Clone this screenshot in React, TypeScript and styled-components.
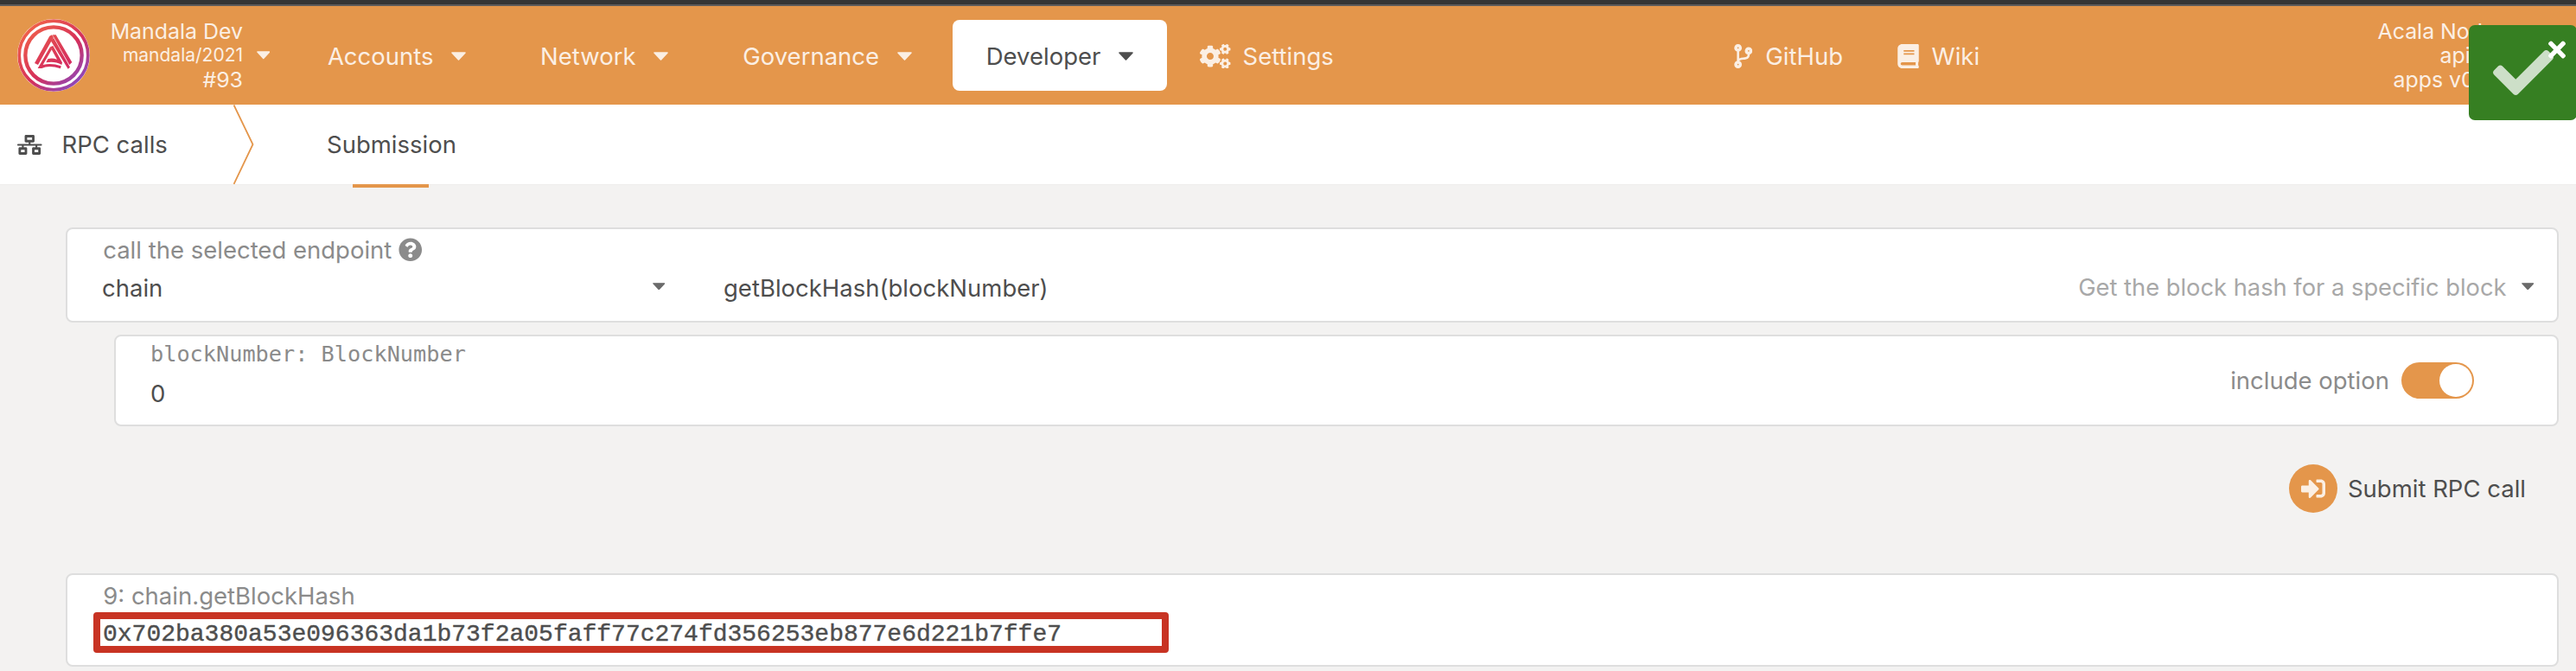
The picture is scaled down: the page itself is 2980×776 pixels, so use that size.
import React from 'react';
import styled, { createGlobalStyle, css } from 'styled-components';
import {
  FaBook,
  FaCheck,
  FaCodeBranch,
  FaCogs,
  FaNetworkWired,
  FaQuestionCircle,
  FaSignInAlt,
  FaTimes,
} from 'react-icons/fa';

const orange = '#e4964b';
const dark = '#4e4e4e';
const muted = '#8b8b8b';

const GlobalStyle = createGlobalStyle`
  *, *::before, *::after { box-sizing: border-box; }
  body {
    margin: 0;
    background: #f3f2f1;
    color: ${dark};
    font: 27.5px/34px Inter, "Liberation Sans", sans-serif;
    overflow: hidden;
  }
`;

const Page = styled.div`
  display: flex;
  flex-direction: column;
  width: 2980px;
  height: 776px;
  overflow: hidden;
  white-space: nowrap;
`;

const WindowEdge = styled.div`
  height: 7px;
  flex: none;
  background: #353535;
  border-bottom: 2px solid #5d5b5b;
`;

const Header = styled.header`
  display: flex;
  align-items: center;
  flex: none;
  height: 114px;
  padding-left: 20px;
  background: ${orange};
  color: #fbefe4;
`;

const Logo = styled.svg`
  flex: none;
  width: 84px;
  height: 84px;
`;

const ChainInfo = styled.div`
  display: flex;
  align-items: center;
  flex: none;
  width: 236px;
`;

const ChainLines = styled.div`
  display: flex;
  flex-direction: column;
  align-items: flex-end;
  width: 177px;
  margin-right: 15.5px;
`;

const InfoLine = styled.div<{ $small?: boolean; $indent?: number }>`
  font-size: ${(p) => (p.$small ? 21 : 24.9)}px;
  line-height: 28px;
  padding-left: ${(p) => p.$indent ?? 0}px;
`;

const Nav = styled.nav`
  display: flex;
  align-items: center;
  gap: 8px;
`;

const NavItem = styled.div<{ $active?: boolean; $link?: boolean }>`
  display: flex;
  align-items: center;
  height: 82px;
  padding: 2px ${(p) => (p.$link ? 30 : 38.9)}px 0;
  gap: ${(p) => (p.$link ? 14 : 20.8)}px;
  border-radius: 8px;
  ${(p) =>
    p.$active &&
    css`
      background: #fff;
      color: ${dark};
    `}
`;

const Links = styled.div`
  display: flex;
  align-items: center;
  gap: 62.5px;
  margin-left: 433px;
`;

const ExternalLink = styled.div`
  display: flex;
  align-items: center;
  gap: 15px;
  padding-top: 2px;
`;

const Glyph = styled.span<{ $w: number; $h: number }>`
  display: flex;
  flex: none;
  svg {
    width: ${(p) => p.$w}px;
    height: ${(p) => p.$h}px;
  }
`;

const NodeInfo = styled.div`
  margin-left: auto;
  width: 229.5px;
`;

const Caret = styled.svg<{ $w: number; $h: number }>`
  flex: none;
  width: ${(p) => p.$w}px;
  height: ${(p) => p.$h}px;
  fill: currentColor;
  stroke: currentColor;
`;

const TabBar = styled.div`
  display: flex;
  align-items: center;
  flex: none;
  height: 93px;
  padding-left: 20px;
  background: #fff;
  border-bottom: 1px solid #eeedec;
`;

const Section = styled.div`
  display: flex;
  align-items: center;
  gap: 23px;
  width: 250px;
`;

const Chevron = styled.svg`
  flex: none;
  width: 24px;
  height: 92px;
`;

const Tab = styled.div`
  position: relative;
  margin-left: 84px;

  &::after {
    content: '';
    position: absolute;
    left: 30px;
    top: 63px;
    width: 88px;
    height: 4px;
    background: ${orange};
  }
`;

const Content = styled.main`
  display: flex;
  flex-direction: column;
  padding: 49px 20px 0 76px;
`;

const Card = styled.section<{ $h: number; $indent?: number; $top?: number; $pad: number }>`
  flex: none;
  height: ${(p) => p.$h}px;
  margin: ${(p) => p.$top ?? 0}px 0 0 ${(p) => p.$indent ?? 0}px;
  padding-top: ${(p) => p.$pad}px;
  background: #fff;
  border: 2px solid #dedede;
  border-radius: 8px;
`;

const Label = styled.div`
  display: flex;
  align-items: center;
  gap: 8px;
  padding-left: 41.2px;
  color: ${muted};
`;

const TypeLabel = styled.div`
  font-family: 'DejaVu Sans Mono', monospace;
  font-size: 25.25px;
  color: ${muted};
`;

const Selects = styled.div`
  display: flex;
  margin-top: 10px;
  padding: 0 27px 0 40px;
`;

const Select = styled.div<{ $w?: number }>`
  display: flex;
  align-items: center;
  ${(p) => (p.$w ? `width: ${p.$w}px; margin-right: 68px;` : 'flex: 1;')}

  ${Caret} {
    color: #6b6b6b;
    margin-top: -4px;
  }
`;

const Value = styled.span`
  flex: 1;
`;

const Hint = styled.span`
  color: #a8a8a8;
  font-size: 27.3px;
  margin-right: 17px;
`;

const ParamBody = styled.div`
  display: flex;
  justify-content: space-between;
  padding: 0 96px 0 40px;
`;

const ParamValue = styled.div`
  margin-top: 11px;
`;

const Option = styled.div`
  display: flex;
  align-items: center;
  gap: 14px;
  height: 42px;
  margin-top: 26px;
  color: ${muted};
`;

const Toggle = styled.span`
  display: flex;
  justify-content: flex-end;
  width: 84px;
  height: 42px;
  padding: 2px;
  border-radius: 21px;
  background: ${orange};

  &::after {
    content: '';
    width: 38px;
    height: 38px;
    border-radius: 50%;
    background: #fff;
  }
`;

const Actions = styled.div`
  display: flex;
  justify-content: flex-end;
  margin-top: 44px;
  padding-right: 38px;
`;

const SubmitButton = styled.div`
  display: flex;
  align-items: center;
  gap: 12px;
`;

const RoundIcon = styled.span`
  display: flex;
  align-items: center;
  justify-content: center;
  width: 56px;
  height: 56px;
  border-radius: 50%;
  background: ${orange};
  color: #fbefe4;
`;

const Result = styled.div`
  width: 1244px;
  height: 47px;
  margin: 2px 0 0 30px;
  padding-left: 3px;
  border: 8px solid #c83323;
  border-radius: 4px;
  font: 28px/35px 'Liberation Mono', monospace;
  -webkit-text-stroke: 0.4px ${dark};
`;

const Toast = styled.div`
  position: absolute;
  left: 2856px;
  top: 29px;
  width: 125px;
  height: 110px;
  border-radius: 7px;
  background: #367f22;
`;

const ToastCheck = styled(FaCheck)`
  position: absolute;
  left: 28px;
  top: 20px;
  width: 70px;
  height: 70px;
  color: #cddfc8;
`;

const ToastClose = styled(FaTimes)`
  position: absolute;
  left: 92px;
  top: 14px;
  width: 20px;
  height: 29px;
  color: #fff;
`;

const Down = ({ w = 17, h = 10 }: { w?: number; h?: number }) => (
  <Caret $w={w} $h={h} viewBox="0 0 17 10">
    <path d="M1 1H16L8.5 9Z" strokeWidth="1.6" strokeLinejoin="round" />
  </Caret>
);

const menus = ['Accounts', 'Network', 'Governance', 'Developer'];

export default function App() {
  return (
    <Page>
      <GlobalStyle />
      <WindowEdge />
      <Header>
        <Logo viewBox="60 63 252 252">
          <defs>
            <linearGradient id="ring" gradientUnits="userSpaceOnUse" x1="105" y1="90" x2="280" y2="285">
              <stop offset="0" stopColor="#f0604a" />
              <stop offset="0.55" stopColor="#d5305a" />
              <stop offset="1" stopColor="#8a48c0" />
            </linearGradient>
            <linearGradient id="mark" gradientUnits="userSpaceOnUse" x1="150" y1="118" x2="215" y2="236">
              <stop offset="0" stopColor="#e5504e" />
              <stop offset="1" stopColor="#d42a60" />
            </linearGradient>
          </defs>
          <circle cx="186" cy="189" r="126" fill="#fff" />
          <g fill="none" stroke="url(#ring)">
            <circle cx="186" cy="189" r="119.5" strokeWidth="11" />
            <circle cx="186" cy="189" r="98" strokeWidth="13" />
          </g>
          <g fill="url(#mark)">
            <path d="M172 122L180 118L186 126L132 222L120 216Z" />
            <path d="M182 118H194L250 213L241 222Z" />
            <path d="M176 138L186 128L243 230L236 236Z" />
            <path d="M131 234L174 160L180 168L149 222Q178 214 212 226L210 235Q170 222 145 234Z" />
            <path d="M174 160L184 156L216 214L214 222Q190 208 160 214L166 202Q180 197 198 203Z" />
          </g>
        </Logo>
        <ChainInfo>
          <ChainLines>
            <InfoLine>Mandala Dev</InfoLine>
            <InfoLine $small>mandala/2021</InfoLine>
            <InfoLine>#93</InfoLine>
          </ChainLines>
          <Down w={15.5} h={9.5} />
        </ChainInfo>
        <Nav>
          {menus.map((name) => (
            <NavItem key={name} $active={name === 'Developer'}>
              {name}
              <Down />
            </NavItem>
          ))}
          <NavItem $link>
            <Glyph $w={35.5} $h={28.4}><FaCogs /></Glyph>
            Settings
          </NavItem>
        </Nav>
        <Links>
          <ExternalLink>
            <Glyph $w={21.5} $h={28}><FaCodeBranch /></Glyph>
            GitHub
          </ExternalLink>
          <ExternalLink>
            <Glyph $w={25} $h={28}><FaBook /></Glyph>
            Wiki
          </ExternalLink>
        </Links>
        <NodeInfo>
          <InfoLine>Acala Node</InfoLine>
          <InfoLine $indent={72}>api</InfoLine>
          <InfoLine $indent={18}>apps v0</InfoLine>
        </NodeInfo>
      </Header>

      <TabBar>
        <Section>
          <Glyph $w={28.5} $h={23}><FaNetworkWired /></Glyph>
          RPC calls
        </Section>
        <Chevron viewBox="0 0 24 92">
          <path d="M0.5 0.5L22.5 46L0.5 92" fill="none" stroke={orange} strokeWidth="1.8" />
        </Chevron>
        <Tab>Submission</Tab>
      </TabBar>

      <Content>
        <Card $h={110} $pad={7}>
          <Label>
            call the selected endpoint
            <Glyph $w={27.5} $h={27.5}><FaQuestionCircle /></Glyph>
          </Label>
          <Selects>
            <Select $w={651}>
              <Value>chain</Value>
              <Down w={14.5} h={8.5} />
            </Select>
            <Select>
              <Value>getBlockHash(blockNumber)</Value>
              <Hint>Get the block hash for a specific block</Hint>
              <Down w={14.5} h={8.5} />
            </Select>
          </Selects>
        </Card>

        <Card $h={106} $pad={4} $indent={56} $top={14}>
          <ParamBody>
            <div>
              <TypeLabel>blockNumber: BlockNumber</TypeLabel>
              <ParamValue>0</ParamValue>
            </div>
            <Option>
              include option
              <Toggle />
            </Option>
          </ParamBody>
        </Card>

        <Actions>
          <SubmitButton>
            <RoundIcon>
              <Glyph $w={28} $h={28}><FaSignInAlt /></Glyph>
            </RoundIcon>
            Submit RPC call
          </SubmitButton>
        </Actions>

        <Card $h={108} $pad={7} $top={70}>
          <Label>9: chain.getBlockHash</Label>
          <Result>0x702ba380a53e096363da1b73f2a05faff77c274fd356253eb877e6d221b7ffe7</Result>
        </Card>
      </Content>

      <Toast>
        <ToastCheck />
        <ToastClose />
      </Toast>
    </Page>
  );
}
